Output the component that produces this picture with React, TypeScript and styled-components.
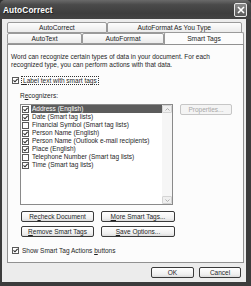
import React from "react";
import styled, { createGlobalStyle } from "styled-components";

const Global = createGlobalStyle`
  html, body { margin: 0; padding: 0; background: #2e2e2e; }
  body { font-family: "Liberation Sans", Arial, sans-serif; }
  * { box-sizing: border-box; }
`;

const Window = styled.div`
  width: 251px;
  height: 286px;
  display: flex;
  flex-direction: column;
  background: #3c3c3c;
  padding: 0 5px 4px 2px;
  border-radius: 5px 5px 0 0;
`;

const TitleBar = styled.div`
  height: 19px;
  margin: 0 -5px 0 -2px;
  padding: 0 4px 0 3px;
  display: flex;
  align-items: center;
  justify-content: space-between;
  background: linear-gradient(#6a6a6a 0%, #4a4a4a 25%, #3e3e3e 70%, #444 100%);
  border-radius: 5px 5px 0 0;
`;

const Title = styled.span`
  color: #fff;
  font-weight: bold;
  font-size: 8.3px;
  letter-spacing: 0.1px;
  text-shadow: 1px 1px 0 #222;
`;

const CloseBtn = styled.div`
  width: 13px;
  height: 14px;
  border: 1px solid #e8e8e8;
  border-radius: 2px;
  background: linear-gradient(#8a8a8a, #5a5a5a);
  display: flex;
  align-items: center;
  justify-content: center;
`;

const Body = styled.div`
  flex: 1;
  background: #ececec;
  padding: 3px 2px 0 5px;
  display: flex;
  flex-direction: column;
`;

const TabRow = styled.div`
  display: flex;
  height: 11px;
  padding-right: 2px;
`;

const Tab = styled.div<{ $w: number; $sel?: boolean }>`
  width: ${(p) => p.$w}px;
  height: ${(p) => (p.$sel ? 12 : 11)}px;
  margin-top: ${(p) => (p.$sel ? -1 : 0)}px;
  margin-right: ${(p) => (p.$sel ? -2 : 0)}px;
  padding-bottom: ${(p) => (p.$sel ? 1 : 0)}px;
  border: 1px solid #9a9a9a;
  border-bottom: ${(p) => (p.$sel ? "none" : "1px solid #9a9a9a")};
  border-radius: 2px 2px 0 0;
  background: ${(p) => (p.$sel ? "#fcfcfc" : "linear-gradient(#fdfdfd, #ebebeb)")};
  font-size: 6.7px;
  color: #222;
  display: flex;
  align-items: center;
  justify-content: center;
  position: relative;
  z-index: ${(p) => (p.$sel ? 2 : 1)};
`;

const Panel = styled.div`
  width: 237px;
  height: 219px;
  border: 1px solid #919191;
  background: #fcfcfc;
  padding: 8px 3px 0 3px;
  display: flex;
  flex-direction: column;
  font-size: 6.5px;
  color: #1e1e1e;
`;

const Para = styled.p`
  margin: 0;
  line-height: 8px;
  width: 205px;
`;

const CheckRow = styled.div<{ $mt: number }>`
  display: flex;
  align-items: center;
  gap: 3px;
  margin-top: ${(p) => p.$mt}px;
  padding-left: 1px;
  height: 8px;
`;

const Box = styled.span`
  width: 7px;
  height: 7px;
  border: 1px solid #5a5a5a;
  background: #fff;
  display: inline-flex;
  align-items: center;
  justify-content: center;
  flex-shrink: 0;
`;

const FocusLabel = styled.span`
  outline: 1px dotted #333;
  padding: 0 1px;
  line-height: 7px;
`;

const Section = styled.div`
  padding-left: 9px;
  display: flex;
  flex-direction: column;
`;

const Label = styled.div`
  margin-top: 8px;
  line-height: 8px;
`;

const ListArea = styled.div`
  margin-top: 4px;
  display: flex;
  gap: 7px;
  align-items: flex-start;
`;

const ListBox = styled.div`
  width: 153px;
  height: 101px;
  border: 1px solid #8a8a8a;
  background: #fff;
  display: flex;
`;

const Items = styled.div`
  flex: 1;
  padding: 0 0 0 1px;
  display: flex;
  flex-direction: column;
`;

const Item = styled.div`
  height: 8px;
  display: flex;
  align-items: center;
  gap: 2px;
`;

const ItemText = styled.span<{ $sel?: boolean }>`
  flex: 1;
  height: 8px;
  line-height: 8px;
  padding-left: 1px;
  background: ${(p) => (p.$sel ? "#5c5c5c" : "transparent")};
  color: ${(p) => (p.$sel ? "#fff" : "#1e1e1e")};
  white-space: nowrap;
`;

const ScrollBar = styled.div`
  width: 10px;
  display: flex;
  flex-direction: column;
  justify-content: space-between;
  background: #f6f6f6;
`;

const ScrollBtn = styled.div`
  height: 8px;
  border: 1px solid #d4d4d4;
  border-radius: 1px;
  background: #efefef;
  display: flex;
  align-items: center;
  justify-content: center;
`;

const Button = styled.div<{ $w: number; $disabled?: boolean }>`
  width: ${(p) => p.$w}px;
  height: 11px;
  border: 1px solid ${(p) => (p.$disabled ? "#c6c6c6" : "#3a3a3a")};
  border-radius: 2px;
  background: ${(p) => (p.$disabled ? "#f4f4f4" : "linear-gradient(#ffffff, #f0f0f0 70%, #dcdcdc)")};
  color: ${(p) => (p.$disabled ? "#a8a8a8" : "#1e1e1e")};
  font-size: 6.5px;
  display: flex;
  align-items: center;
  justify-content: center;
  white-space: nowrap;
  flex-shrink: 0;
`;

const ButtonGrid = styled.div`
  margin-top: 6px;
  display: grid;
  grid-template-columns: 73px 74px;
  column-gap: 7px;
  row-gap: 4px;
  padding-left: 1px;
`;

const U = styled.span`
  text-decoration: underline;
`;

const Footer = styled.div`
  display: flex;
  justify-content: flex-end;
  gap: 5px;
  padding: 4px 3px 0 0;
`;

const Check = () => (
  <svg width="5" height="5" viewBox="0 0 5 5">
    <path d="M0.5 2.3 L2 3.8 L4.6 0.8" stroke="#2a2a2a" strokeWidth="1.1" fill="none" />
  </svg>
);

const items: [string, boolean][] = [
  ["Address (English)", true],
  ["Date (Smart tag lists)", true],
  ["Financial Symbol (Smart tag lists)", false],
  ["Person Name (English)", true],
  ["Person Name (Outlook e-mail recipients)", true],
  ["Place (English)", true],
  ["Telephone Number (Smart tag lists)", false],
  ["Time (Smart tag lists)", true],
];

export default function App() {
  return (
    <>
      <Global />
      <Window>
        <TitleBar>
          <Title>AutoCorrect</Title>
          <CloseBtn>
            <svg width="8" height="8" viewBox="0 0 8 8">
              <path d="M1 1 L7 7 M7 1 L1 7" stroke="#fff" strokeWidth="1.6" />
            </svg>
          </CloseBtn>
        </TitleBar>
        <Body>
          <TabRow>
            <Tab $w={101}>AutoCorrect</Tab>
            <Tab $w={137}>AutoFormat As You Type</Tab>
          </TabRow>
          <TabRow>
            <Tab $w={76}>AutoText</Tab>
            <Tab $w={83}>AutoFormat</Tab>
            <Tab $w={81} $sel>Smart Tags</Tab>
          </TabRow>
          <Panel>
            <Para>
              Word can recognize certain types of data in your document. For each recognized type, you can perform actions with that data.
            </Para>
            <CheckRow $mt={7}>
              <Box><Check /></Box>
              <FocusLabel><U>L</U>abel text with smart tags</FocusLabel>
            </CheckRow>
            <Section>
              <Label>R<U>e</U>cognizers:</Label>
              <ListArea>
                <ListBox>
                  <Items>
                    {items.map(([name, on], i) => (
                      <Item key={name}>
                        <Box>{on && <Check />}</Box>
                        <ItemText $sel={i === 0}>{name}</ItemText>
                      </Item>
                    ))}
                  </Items>
                  <ScrollBar>
                    <ScrollBtn>
                      <svg width="5" height="3" viewBox="0 0 5 3">
                        <path d="M0.5 2.5 L2.5 0.5 L4.5 2.5" stroke="#b0b0b0" fill="none" />
                      </svg>
                    </ScrollBtn>
                    <ScrollBtn>
                      <svg width="5" height="3" viewBox="0 0 5 3">
                        <path d="M0.5 0.5 L2.5 2.5 L4.5 0.5" stroke="#b0b0b0" fill="none" />
                      </svg>
                    </ScrollBtn>
                  </ScrollBar>
                </ListBox>
                <Button $w={52} $disabled>Properties...</Button>
              </ListArea>
              <ButtonGrid>
                <Button $w={73}>Re<U>c</U>heck Document</Button>
                <Button $w={74}><U>M</U>ore Smart Tags...</Button>
                <Button $w={73}><U>R</U>emove Smart Tags</Button>
                <Button $w={74}><U>S</U>ave Options...</Button>
              </ButtonGrid>
            </Section>
            <CheckRow $mt={9}>
              <Box><Check /></Box>
              <span>Show Smart Tag Actions <U>b</U>uttons</span>
            </CheckRow>
          </Panel>
          <Footer>
            <Button $w={43}>OK</Button>
            <Button $w={42}>Cancel</Button>
          </Footer>
        </Body>
      </Window>
    </>
  );
}
